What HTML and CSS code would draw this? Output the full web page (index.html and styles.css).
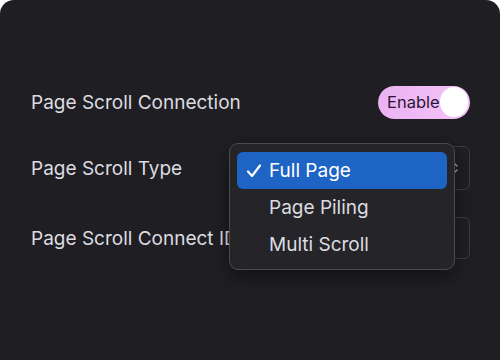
FILE: index.html
```html
<!DOCTYPE html>
<html lang="en">
<head>
  <meta charset="UTF-8">
  <meta name="viewport" content="width=device-width, initial-scale=1.0">
  <title>Page Scroll Settings</title>
  <link rel="stylesheet" href="styles.css">
</head>
<body>
  <div class="panel">
    <div class="settings">
      <div class="setting-row">
        <span class="setting-label">Page Scroll Connection</span>
        <div class="toggle">
          <span class="toggle-text">Enable</span>
          <span class="toggle-knob"></span>
        </div>
      </div>
      <div class="setting-row">
        <span class="setting-label">Page Scroll Type</span>
        <div class="select-box">
          <svg class="select-arrow" width="8" height="12" viewBox="0 0 8 12">
            <path d="M1 4 L4 1 L7 4 M1 8 L4 11 L7 8" fill="none" stroke="#b8b8bc" stroke-width="1.3" stroke-linecap="round" stroke-linejoin="round"/>
          </svg>
        </div>
      </div>
      <div class="setting-row">
        <span class="setting-label">Page Scroll Connect ID</span>
        <div class="input-box"></div>
      </div>
    </div>

    <ul class="dropdown-menu">
      <li class="menu-item selected">
        <svg class="check" width="16" height="16" viewBox="0 0 16 16">
          <path d="M2 8.5 L6 13 L14 2.5" fill="none" stroke="#fff" stroke-width="2.2" stroke-linecap="round" stroke-linejoin="round"/>
        </svg>
        <span>Full Page</span>
      </li>
      <li class="menu-item"><span>Page Piling</span></li>
      <li class="menu-item"><span>Multi Scroll</span></li>
    </ul>
  </div>
</body>
</html>
```

FILE: styles.css
```css
* {
  box-sizing: border-box;
  margin: 0;
  padding: 0;
}

body {
  background: #fff;
  font-family: Inter, 'Liberation Sans', sans-serif;
}

.panel {
  position: relative;
  width: 500px;
  height: 360px;
  background: #1f1f23;
  border-radius: 14px 14px 0 0;
  overflow: hidden;
}

.settings {
  display: flex;
  flex-direction: column;
  padding: 80px 30px 0 31px;
}

.setting-row {
  display: flex;
  justify-content: space-between;
  align-items: center;
  height: 44px;
}

.setting-row + .setting-row {
  margin-top: 22px;
}

.setting-row:last-child {
  margin-top: 26px;
}

.setting-label {
  color: #dcdce0;
  font-size: 19px;
  white-space: nowrap;
}

.toggle {
  display: flex;
  align-items: center;
  justify-content: space-between;
  width: 92px;
  height: 33px;
  padding: 0 2px 0 9px;
  border-radius: 17px;
  background: linear-gradient(90deg, #eab2f2, #f4c4f8);
}

.toggle-text {
  color: #2a1534;
  font-size: 16.5px;
}

.toggle-knob {
  width: 30px;
  height: 30px;
  border-radius: 50%;
  background: #fff;
}

.select-box,
.input-box {
  position: relative;
  width: 220px;
  height: 44px;
  border: 1px solid #3c3c42;
  border-radius: 6px;
  background: #202024;
}

.input-box {
  height: 42px;
}

.select-arrow {
  position: absolute;
  right: 11px;
  top: 15px;
}

.dropdown-menu {
  position: absolute;
  left: 229px;
  top: 143px;
  width: 226px;
  height: 127px;
  padding: 8px 7px;
  list-style: none;
  background: #252529;
  border: 1px solid #4a4a50;
  border-radius: 9px;
  box-shadow: 0 6px 18px rgba(0, 0, 0, 0.45);
}

.menu-item {
  position: relative;
  display: flex;
  align-items: center;
  height: 37px;
  padding-left: 32px;
  color: #dcdce0;
  font-size: 19px;
  border-radius: 6px;
}

.menu-item.selected {
  background: #1d64c5;
  color: #fff;
}

.check {
  position: absolute;
  left: 9px;
  top: 11px;
}
```
